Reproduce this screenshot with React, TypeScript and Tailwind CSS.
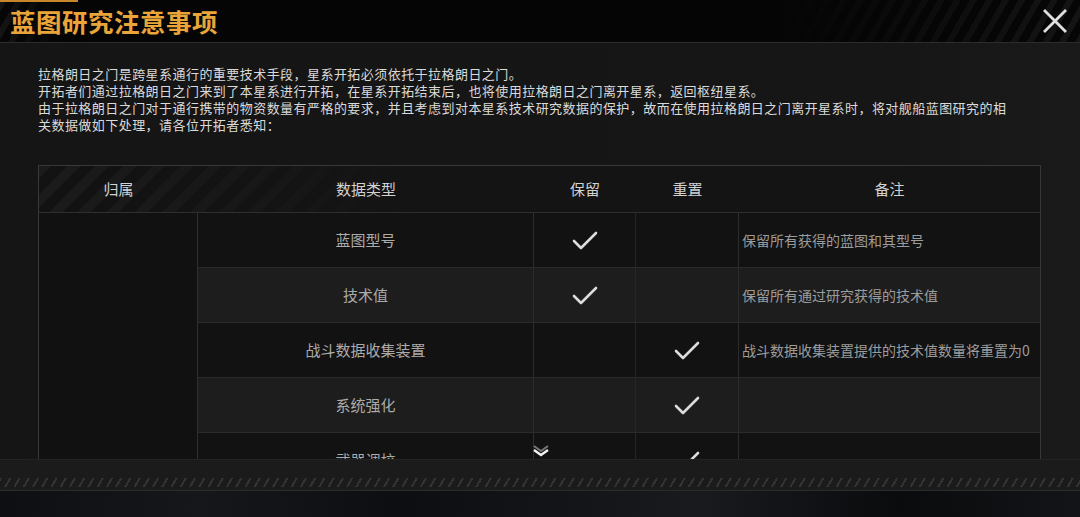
import { Fragment } from 'react'

type Row = {
  name: string
  keep: boolean
  reset: boolean
  note: string
}

const rows: Row[] = [
  { name: '蓝图型号', keep: true, reset: false, note: '保留所有获得的蓝图和其型号' },
  { name: '技术值', keep: true, reset: false, note: '保留所有通过研究获得的技术值' },
  { name: '战斗数据收集装置', keep: false, reset: true, note: '战斗数据收集装置提供的技术值数量将重置为0' },
  { name: '系统强化', keep: false, reset: true, note: '' },
  { name: '武器调校', keep: false, reset: true, note: '' },
]

const intro = [
  '拉格朗日之门是跨星系通行的重要技术手段，星系开拓必须依托于拉格朗日之门。',
  '开拓者们通过拉格朗日之门来到了本星系进行开拓，在星系开拓结束后，也将使用拉格朗日之门离开星系，返回枢纽星系。',
  '由于拉格朗日之门对于通行携带的物资数量有严格的要求，并且考虑到对本星系技术研究数据的保护，故而在使用拉格朗日之门离开星系时，将对舰船蓝图研究的相',
  '关数据做如下处理，请各位开拓者悉知：',
]

function Check() {
  return (
    <svg width="26" height="19" viewBox="0 0 26 19" fill="none">
      <polyline points="2,10 9,17 24,2" stroke="#dcdcdc" strokeWidth="2.6" strokeLinecap="round" strokeLinejoin="round" />
    </svg>
  )
}

export default function App() {
  return (
    <div className="w-[1080px] h-[517px] overflow-hidden bg-[#151515] font-['Noto_Sans_CJK_SC','Liberation_Sans',sans-serif] flex flex-col">
      {/* Title bar */}
      <div className="relative h-[43px] flex-shrink-0 flex items-center justify-between pl-[10px] pr-[10px] border-b border-[#2c2c2c] bg-[linear-gradient(to_right,transparent_0px,#050505_60px,#050505_780px,transparent_1080px),repeating-linear-gradient(120deg,#141414_0_6px,#060606_6px_14px)]">
        <div className="absolute left-0 top-0 h-[2px] w-[78px] bg-[#c8862a]" />
        <h1 className="text-[25.5px] font-bold leading-none tracking-[0.5px] text-[#eaa53a]">蓝图研究注意事项</h1>
        <svg width="26" height="26" viewBox="0 0 26 26" className="mr-[2px]">
          <path d="M3 3 L23 23 M23 3 L3 23" stroke="#e0e0e0" strokeWidth="2.8" strokeLinecap="square" />
        </svg>
      </div>

      {/* Body */}
      <div className="relative h-[416px] flex-shrink-0 overflow-hidden bg-[linear-gradient(to_right,#151515_0px,#161616_900px,#1a1a1a_1080px)] px-[38px] pt-[22px]">
        <div className="text-[13px] leading-[17px] tracking-[0.45px] text-[#dadada]">
          {intro.map((line, i) => (
            <p key={i} className="whitespace-nowrap">{line}</p>
          ))}
        </div>

        <div className="mt-[32px] w-[1003px] border border-[#383838] bg-[#121212]">
          {/* header row */}
          <div className="grid grid-cols-[159px_336px_102px_103px_1fr] h-[47px] items-center text-[15px] text-[#d2d2d2] border-b border-[#2e2e2e] bg-[linear-gradient(to_right,transparent_0px,#141414_380px),repeating-linear-gradient(135deg,#1b1b1b_0_9px,#121212_9px_20px)]">
            <div className="text-center">归属</div>
            <div className="text-center">数据类型</div>
            <div className="text-center">保留</div>
            <div className="text-center">重置</div>
            <div className="text-center">备注</div>
          </div>

          {/* body rows */}
          <div className="flex">
            <div className="w-[159px] flex-shrink-0 border-r border-[#2e2e2e] bg-[#111111]" />
            <div className="flex-1 flex flex-col">
              {rows.map((row, i) => (
                <Fragment key={row.name}>
                  <div
                    className={`grid grid-cols-[336px_102px_103px_1fr] h-[55px] items-center border-b border-[#2a2a2a] ${
                      i % 2 === 0 ? 'bg-[#121212]' : 'bg-[#1d1d1d]'
                    }`}
                  >
                    <div className="h-full flex items-center justify-center text-[15px] text-[#ababab] border-r border-[#2c2c2c]">
                      {row.name}
                    </div>
                    <div className="h-full flex items-center justify-center border-r border-[#262626]">
                      {row.keep && <Check />}
                    </div>
                    <div className="h-full flex items-center justify-center border-r border-[#2c2c2c]">
                      {row.reset && <Check />}
                    </div>
                    <div className="h-full flex items-center pl-[3px] text-[14px] text-[#9c9c9c] whitespace-nowrap">
                      {row.note}
                    </div>
                  </div>
                </Fragment>
              ))}
            </div>
          </div>
        </div>

        {/* scroll hint */}
        <svg width="20" height="14" viewBox="0 0 20 14" className="absolute left-[531px] bottom-[1px]">
          <path d="M3 2 L10 7 L17 2" stroke="#777" strokeWidth="2" fill="none" />
          <path d="M3 6 L10 11 L17 6" stroke="#f2f2f2" strokeWidth="2.4" fill="none" />
        </svg>
      </div>

      {/* Footer band */}
      <div className="h-[31px] flex-shrink-0 flex flex-col justify-end bg-[#1b1b1b] border-t border-[#242424]">
        <div className="h-[9px] mb-[3px] bg-[repeating-linear-gradient(120deg,#333333_0_2px,#1b1b1b_2px_8px)]" />
      </div>
      <div className="flex-1 border-t border-[#2c2c2c] bg-[linear-gradient(to_right,#0d0f12_0px,#15171b_200px,#0c0e11_400px,#181a1e_700px,#0a0b0d_900px,#121417_1080px)]" />
    </div>
  )
}
